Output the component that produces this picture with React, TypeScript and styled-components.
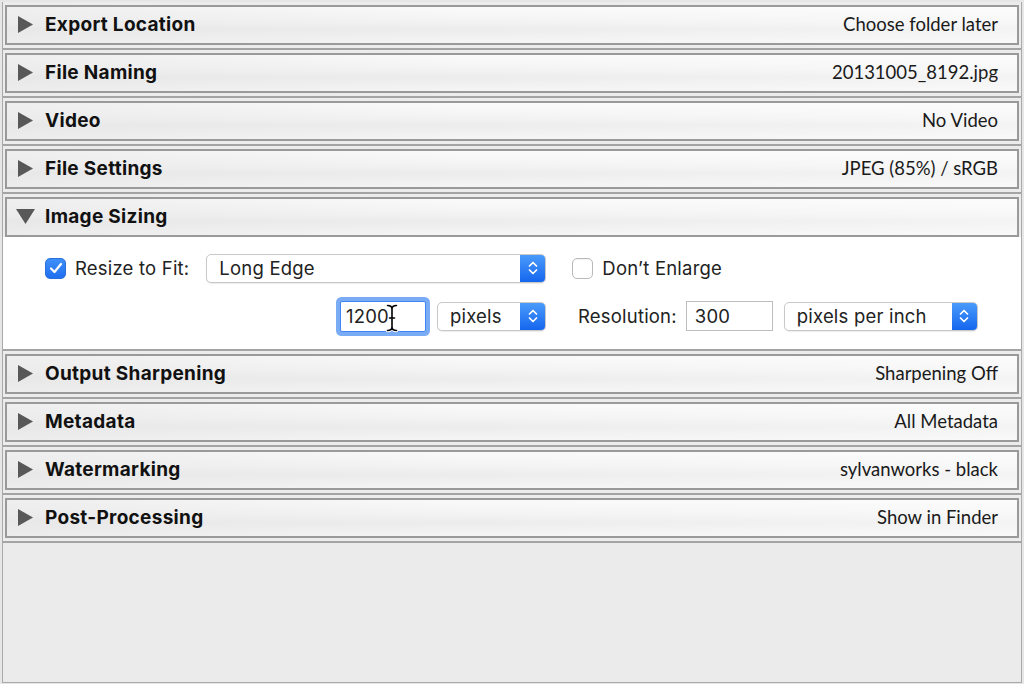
import React from "react";
import styled, { createGlobalStyle } from "styled-components";

const Global = createGlobalStyle`
  html, body { margin: 0; padding: 0; background: #e9e9e9; }
  * { box-sizing: border-box; }
`;

const Frame = styled.div`
  width: 1024px;
  height: 684px;
  padding: 2px 2px 1px 2px;
  background: #e6e6e6;
  display: flex;
`;

const Panel = styled.div`
  flex: 1;
  display: flex;
  flex-direction: column;
  border-left: 1px solid #a9a9a9;
  border-right: 1px solid #a9a9a9;
  border-bottom: 1px solid #a9a9a9;
  background: #ebebeb;
`;

const Section = styled.section<{ open?: boolean }>`
  padding-top: 3px;
  padding-bottom: ${(p) => (p.open ? "0" : "3px")};
  border-bottom: 2px solid #a4a4a4;
  background: #ececec;
`;

const Header = styled.div`
  height: 40px;
  margin: 0 2px;
  border: 2px solid #9a9a9a;
  display: flex;
  align-items: center;
  padding: 0 19px 2px 8px;
  background:
    linear-gradient(to right, rgba(228,228,228,0.5) 0%, rgba(240,240,240,0) 45%, rgba(255,255,255,0.4) 100%),
    linear-gradient(to bottom, #fafafa 0%, #f3f3f3 40%, #ececec 62%, #f5f5f5 100%);
`;

const Disclosure = styled.span`
  width: 20px;
  height: 20px;
  display: flex;
  align-items: center;
  justify-content: center;
  margin-right: 10px;
`;

const Title = styled.span`
  font-family: Inter, "Liberation Sans", Arial, sans-serif;
  font-weight: 700;
  font-size: 19px;
  letter-spacing: 0.3px;
  color: #111;
  flex: 1;
`;

const Value = styled.span`
  font-family: Lato, "Open Sans", sans-serif;
  font-size: 18.5px;
  color: #1a1a1a;
`;

const Content = styled.div`
  background: #ffffff;
  height: 112px;
  padding: 17px 0 14px 0;
  display: flex;
  flex-direction: column;
  gap: 15px;
  font-family: Inter, "Liberation Sans", sans-serif;
  font-size: 18.5px;
  letter-spacing: 0.2px;
  color: #222;
`;

const Row = styled.div<{ indent: number; h: number }>`
  height: ${(p) => p.h}px;
  display: flex;
  align-items: center;
  padding-left: ${(p) => p.indent}px;
`;

const Check = styled.span<{ checked?: boolean; ml?: number }>`
  width: 21px;
  height: 21px;
  margin-left: ${(p) => p.ml ?? 0}px;
  border-radius: 5px;
  display: inline-flex;
  align-items: center;
  justify-content: center;
  flex: none;
  ${(p) =>
    p.checked
      ? `background: linear-gradient(#3f8ff8, #1f6ff0); border: 1px solid #2a6fdc;`
      : `background: #fff; border: 1px solid #b9b9b9; box-shadow: inset 0 1px 1px rgba(0,0,0,0.05);`}
`;

const Label = styled.span<{ ml?: number }>`
  margin-left: ${(p) => p.ml ?? 0}px;
  white-space: nowrap;
`;

const SelectBox = styled.div<{ w: number; ml: number }>`
  width: ${(p) => p.w}px;
  height: 29px;
  margin-left: ${(p) => p.ml}px;
  border: 1px solid #c9c9c9;
  border-radius: 5px;
  background: #fff;
  box-shadow: 0 1px 1px rgba(0,0,0,0.08);
  display: flex;
  align-items: stretch;
  overflow: hidden;
  flex: none;
`;

const SelectText = styled.span`
  flex: 1;
  display: flex;
  align-items: center;
  padding-left: 12px;
`;

const Stepper = styled.span`
  width: 25px;
  background: linear-gradient(#4a9bfa, #1566ee);
  display: flex;
  align-items: center;
  justify-content: center;
`;

const FocusField = styled.div`
  position: relative;
  width: 86px;
  height: 31px;
  border: 1px solid #3f86f2;
  box-shadow: 0 0 0 4px #79acf4;
  border-radius: 2px;
  background: #fff;
  display: flex;
  align-items: center;
  padding-left: 5px;
  flex: none;
`;

const Field = styled.div<{ ml: number }>`
  width: 87px;
  height: 30px;
  margin-left: ${(p) => p.ml}px;
  border: 1px solid #bdbdbd;
  background: #fff;
  display: flex;
  align-items: center;
  padding-left: 8px;
  flex: none;
`;

const Cursor = styled.svg`
  position: absolute;
  left: 44px;
  top: 1px;
`;

const Fill = styled.div`
  flex: 1;
  background: #ebebeb;
`;

const RightTri = () => (
  <svg width="15" height="17" viewBox="0 0 15 17">
    <polygon points="0,0 15,8.5 0,17" fill="#585858" />
  </svg>
);
const DownTri = () => (
  <svg width="19" height="15" viewBox="0 0 19 15">
    <polygon points="0,0 19,0 9.5,15" fill="#585858" />
  </svg>
);

const Chevrons = () => (
  <svg width="12" height="18" viewBox="0 0 12 18">
    <polyline points="2.5,7 6,3.5 9.5,7" fill="none" stroke="#fff" strokeWidth="1.7" strokeLinecap="round" strokeLinejoin="round" />
    <polyline points="2.5,11 6,14.5 9.5,11" fill="none" stroke="#fff" strokeWidth="1.7" strokeLinecap="round" strokeLinejoin="round" />
  </svg>
);

const Tick = () => (
  <svg width="14" height="12" viewBox="0 0 14 12">
    <polyline points="2,6.5 5.5,10 12,2" fill="none" stroke="#fff" strokeWidth="2.2" strokeLinecap="round" strokeLinejoin="round" />
  </svg>
);

const Select = ({ w, ml, text }: { w: number; ml: number; text: string }) => (
  <SelectBox w={w} ml={ml}>
    <SelectText>{text}</SelectText>
    <Stepper>
      <Chevrons />
    </Stepper>
  </SelectBox>
);

const beam = "M2.5 2.5 Q7 2.5 7 6 L7 24 Q7 27.5 2.5 27.5 M11.5 2.5 Q7 2.5 7 6 M7 24 Q7 27.5 11.5 27.5 M4.5 15 L9.5 15";

const sections: { title: string; value: string; open?: boolean }[] = [
  { title: "Export Location", value: "Choose folder later" },
  { title: "File Naming", value: "20131005_8192.jpg" },
  { title: "Video", value: "No Video" },
  { title: "File Settings", value: "JPEG (85%) / sRGB" },
  { title: "Image Sizing", value: "", open: true },
  { title: "Output Sharpening", value: "Sharpening Off" },
  { title: "Metadata", value: "All Metadata" },
  { title: "Watermarking", value: "sylvanworks - black" },
  { title: "Post-Processing", value: "Show in Finder" },
];

export default function App() {
  return (
    <>
      <Global />
      <Frame>
        <Panel>
          {sections.map((s) => (
            <Section key={s.title} open={s.open}>
              <Header>
                <Disclosure>{s.open ? <DownTri /> : <RightTri />}</Disclosure>
                <Title>{s.title}</Title>
                <Value>{s.value}</Value>
              </Header>
              {s.open && (
                <Content>
                  <Row indent={42} h={28}>
                    <Check checked>
                      <Tick />
                    </Check>
                    <Label ml={9}>Resize to Fit:</Label>
                    <Select w={340} ml={17} text="Long Edge" />
                    <Check ml={26} />
                    <Label ml={9}>Don’t Enlarge</Label>
                  </Row>
                  <Row indent={337} h={38}>
                    <FocusField>
                      1200
                      <Cursor width="14" height="30" viewBox="0 0 14 30">
                        <path d={beam} fill="none" stroke="#fff" strokeWidth="3.6" strokeLinecap="round" />
                        <path d={beam} fill="none" stroke="#000" strokeWidth="1.6" strokeLinecap="round" />
                      </Cursor>
                    </FocusField>
                    <Select w={109} ml={11} text="pixels" />
                    <Label ml={32}>Resolution:</Label>
                    <Field ml={9}>300</Field>
                    <Select w={194} ml={11} text="pixels per inch" />
                  </Row>
                </Content>
              )}
            </Section>
          ))}
          <Fill />
        </Panel>
      </Frame>
    </>
  );
}
